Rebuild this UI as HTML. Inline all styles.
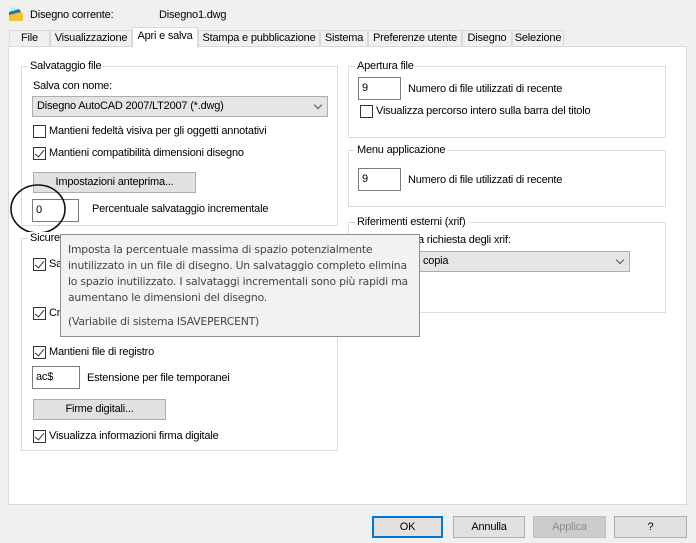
<!DOCTYPE html>
<html><head><style>
*{box-sizing:border-box;margin:0;padding:0}
body{width:696px;height:543px;background:#f0f0f0;font-family:"Liberation Sans",Arial,sans-serif;font-size:11px;color:#000;position:relative;overflow:hidden;letter-spacing:-0.2px}
.a{position:absolute;white-space:nowrap}
.tab{position:absolute;top:30px;height:17px;border:1px solid #d9d9d9;border-bottom:none;background:#f0f0f0;text-align:center;line-height:15px}
.panel{position:absolute;left:8px;top:46px;width:679px;height:459px;background:#fff;border:1px solid #d9d9d9}
.grp{position:absolute;border:1px solid #dcdcdc}
.gt{position:absolute;background:#fff;padding:0 2px;top:-7px;left:6px;line-height:12px}
.cb{position:absolute;width:13px;height:13px;border:1px solid #333;background:#fff}
.cb.c::after{content:"";position:absolute;left:3px;top:0px;width:4px;height:8px;border:solid #333;border-width:0 1.3px 1.3px 0;transform:rotate(40deg)}
.inp{position:absolute;border:1px solid #7a7a7a;background:#fff;padding:2px 3px;height:23px;line-height:16px}
.btn{position:absolute;background:#e1e1e1;border:1px solid #adadad;text-align:center;line-height:18px}
.sel{position:absolute;background:#e5e5e5;border:1px solid #adadad;height:21px;line-height:19px;padding-left:4px}
.arr{position:absolute;right:6px;top:5px;width:6px;height:6px;border:solid #555;border-width:0 1px 1px 0;transform:rotate(45deg)}
</style></head><body>
<svg class="a" style="left:8px;top:6px" width="16" height="16"><path d="M1 6 L11 3 L15 8 L15 15 L1 15Z" fill="#f2c230"/><path d="M1 6 L11 3 L13 6 L1 9Z" fill="#2c6fb0"/><circle cx="5" cy="3" r="2" fill="#9fd"/></svg>
<div class="a" style="left:30px;top:9px">Disegno corrente:</div>
<div class="a" style="left:159px;top:9px">Disegno1.dwg</div>
<div class="tab" style="left:9px;width:41px">File</div>
<div class="tab" style="left:50px;width:82px">Visualizzazione</div>
<div class="tab" style="left:132px;width:66px;top:27px;height:21px;background:#fff;z-index:2;line-height:17px">Apri e salva</div>
<div class="tab" style="left:198px;width:122px">Stampa e pubblicazione</div>
<div class="tab" style="left:320px;width:48px">Sistema</div>
<div class="tab" style="left:368px;width:94px">Preferenze utente</div>
<div class="tab" style="left:462px;width:50px">Disegno</div>
<div class="tab" style="left:512px;width:52px">Selezione</div>
<div class="panel"></div>

<div class="grp" style="left:21px;top:66px;width:317px;height:160px"><div class="gt">Salvataggio file</div></div>
<div class="a" style="left:33px;top:80px">Salva con nome:</div>
<div class="sel" style="left:32px;top:96px;width:296px">Disegno AutoCAD 2007/LT2007 (*.dwg)<div class="arr"></div></div>
<div class="cb" style="left:33px;top:125px"></div><div class="a" style="left:49px;top:125px">Mantieni fedeltà visiva per gli oggetti annotativi</div>
<div class="cb c" style="left:33px;top:147px"></div><div class="a" style="left:49px;top:147px">Mantieni compatibilità dimensioni disegno</div>
<div class="btn" style="left:33px;top:172px;width:163px;height:21px;line-height:19px">Impostazioni anteprima...</div>
<div class="inp" style="left:32px;top:199px;width:47px">0</div>
<div class="a" style="left:92px;top:203px">Percentuale salvataggio incrementale</div>
<svg class="a" style="left:8px;top:180px" width="62" height="58"><ellipse cx="30" cy="29" rx="27" ry="24" fill="none" stroke="#111" stroke-width="1.6"/></svg>

<div class="grp" style="left:21px;top:238px;width:317px;height:213px"><div class="gt">Sicurezza</div></div>
<div class="cb c" style="left:33px;top:258px"></div><div class="a" style="left:49px;top:258px">Sa</div>
<div class="cb c" style="left:33px;top:307px"></div><div class="a" style="left:49px;top:307px">Cr</div>
<div class="cb c" style="left:33px;top:346px"></div><div class="a" style="left:49px;top:346px">Mantieni file di registro</div>
<div class="inp" style="left:32px;top:366px;width:48px">ac$</div>
<div class="a" style="left:87px;top:372px">Estensione per file temporanei</div>
<div class="btn" style="left:33px;top:399px;width:133px;height:21px;line-height:19px">Firme digitali...</div>
<div class="cb c" style="left:33px;top:430px"></div><div class="a" style="left:49px;top:430px">Visualizza informazioni firma digitale</div>

<div class="grp" style="left:348px;top:66px;width:318px;height:72px"><div class="gt">Apertura file</div></div>
<div class="inp" style="left:358px;top:77px;width:43px">9</div>
<div class="a" style="left:408px;top:83px">Numero di file utilizzati di recente</div>
<div class="cb" style="left:360px;top:105px"></div><div class="a" style="left:376px;top:105px">Visualizza percorso intero sulla barra del titolo</div>
<div class="grp" style="left:348px;top:150px;width:318px;height:57px"><div class="gt">Menu applicazione</div></div>
<div class="inp" style="left:358px;top:168px;width:43px">9</div>
<div class="a" style="left:408px;top:174px">Numero di file utilizzati di recente</div>
<div class="grp" style="left:348px;top:222px;width:318px;height:91px"><div class="gt">Riferimenti esterni (xrif)</div></div>
<div class="a" style="left:418px;top:234px">a richiesta degli xrif:</div>
<div class="sel" style="left:418px;top:251px;width:212px">copia<div class="arr"></div></div>

<div class="a" style="left:60px;top:234px;width:360px;height:103px;background:#f1f2f4;border:1px solid #8e8e8e;font-family:'DejaVu Sans',sans-serif;font-size:10.8px;letter-spacing:-0.2px;color:#444;padding:7px 7px;line-height:16px;overflow:hidden;z-index:5">Imposta la percentuale massima di spazio potenzialmente<br>inutilizzato in un file di disegno. Un salvataggio completo elimina<br>lo spazio inutilizzato. I salvataggi incrementali sono più rapidi ma<br>aumentano le dimensioni del disegno.<div style="margin-top:8px">(Variabile di sistema ISAVEPERCENT)</div></div>

<div class="btn" style="left:372px;top:516px;width:71px;height:22px;border:2px solid #0078d7">OK</div>
<div class="btn" style="left:453px;top:516px;width:72px;height:22px;line-height:20px">Annulla</div>
<div class="btn" style="left:533px;top:516px;width:73px;height:22px;line-height:20px;color:#8d8d8d;background:#ccc;border-color:#bfbfbf">Applica</div>
<div class="btn" style="left:614px;top:516px;width:73px;height:22px;line-height:20px">?</div>
</body></html>
